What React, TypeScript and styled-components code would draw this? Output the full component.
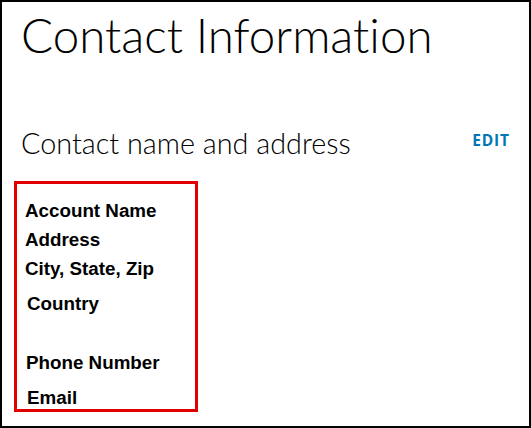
import React from "react";
import styled, { createGlobalStyle } from "styled-components";

const Global = createGlobalStyle`
  html, body { margin: 0; padding: 0; background: #fff; }
  * { box-sizing: border-box; }
`;

const Frame = styled.div`
  width: 531px;
  height: 428px;
  border: 2px solid #000;
  padding: 0 19px 0 19px;
  font-family: "Lato", "Open Sans", sans-serif;
  font-variant-ligatures: none;
  color: #000;
  overflow: hidden;
`;

const Title = styled.h1`
  margin: 0;
  padding-top: 3px;
  font-size: 47.5px;
  font-weight: 300;
  line-height: 60px;
  letter-spacing: 0;
`;

const SectionHeader = styled.div`
  display: flex;
  justify-content: space-between;
  align-items: flex-start;
  margin-top: 60px;
`;

const SectionTitle = styled.h2`
  margin: 0;
  font-size: 28.8px;
  font-weight: 300;
  line-height: 36px;
`;

const EditLink = styled.a`
  display: block;
  padding-top: 5px;
  font-family: "Open Sans", sans-serif;
  font-size: 15.5px;
  line-height: 20px;
  font-weight: 700;
  color: #0078b4;
  letter-spacing: 0.9px;
  text-decoration: none;
  cursor: pointer;
`;

const InfoBox = styled.div`
  margin-top: 20px;
  margin-left: -7px;
  width: 184px;
  height: 231px;
  border: 3px solid #e00000;
  padding: 4px 0 0 8px;
  display: flex;
  flex-direction: column;
`;

const Label = styled.div<{ $gap: number; $indent?: number }>`
  font-family: "Liberation Sans", Arial, sans-serif;
  font-weight: 700;
  font-size: 18.8px;
  line-height: 21px;
  margin-top: ${(p) => p.$gap}px;
  padding-left: ${(p) => p.$indent ?? 0}px;
`;

const rows: { text: string; gap: number; indent?: number }[] = [
  { text: "Account Name", gap: 12 },
  { text: "Address", gap: 8 },
  { text: "City, State, Zip", gap: 8 },
  { text: "Country", gap: 13.5, indent: 2 },
  { text: "Phone Number", gap: 38, indent: 1 },
  { text: "Email", gap: 14, indent: 2 },
];

export default function App() {
  return (
    <>
      <Global />
      <Frame>
        <Title>Contact Information</Title>
        <SectionHeader>
          <SectionTitle>Contact name and address</SectionTitle>
          <EditLink>EDIT</EditLink>
        </SectionHeader>
        <InfoBox>
          {rows.map((r) => (
            <Label key={r.text} $gap={r.gap} $indent={r.indent}>
              {r.text}
            </Label>
          ))}
        </InfoBox>
      </Frame>
    </>
  );
}
